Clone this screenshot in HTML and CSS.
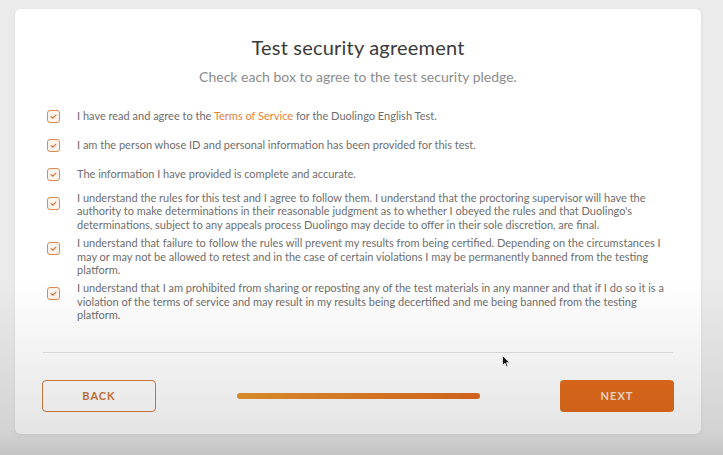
FILE: index.html
```html
<!DOCTYPE html>
<html>
<head>
    <title>Test security agreement</title>
    <meta name="viewport" content="width=device-width, initial-scale=1">
    <link rel="stylesheet" href="styles.css">
</head>
<body>
    <main class="card">
        <header class="head">
            <h1>Test security agreement</h1>
            <p>Check each box to agree to the test security pledge.</p>
        </header>

        <ul class="pledges">
            <li class="pledge">
                <span class="box-wrap"><span class="box"><svg viewBox="0 0 10 10"><path d="M2.8 5.2 L4.4 6.6 L7.2 3.8"/></svg></span></span>
                <div class="pledge-text"><span>I have read and agree to the <a href="#">Terms of Service</a> for the Duolingo English Test.</span></div>
            </li>
            <li class="pledge">
                <span class="box-wrap"><span class="box"><svg viewBox="0 0 10 10"><path d="M2.8 5.2 L4.4 6.6 L7.2 3.8"/></svg></span></span>
                <div class="pledge-text"><span>I am the person whose ID and personal information has been provided for this test.</span></div>
            </li>
            <li class="pledge">
                <span class="box-wrap"><span class="box"><svg viewBox="0 0 10 10"><path d="M2.8 5.2 L4.4 6.6 L7.2 3.8"/></svg></span></span>
                <div class="pledge-text"><span>The information I have provided is complete and accurate.</span></div>
            </li>
            <li class="pledge">
                <span class="box-wrap"><span class="box"><svg viewBox="0 0 10 10"><path d="M2.8 5.2 L4.4 6.6 L7.2 3.8"/></svg></span></span>
                <div class="pledge-text"><span>I understand the rules for this test and I agree to follow them. I understand that the proctoring supervisor will have the authority to make determinations in their reasonable judgment as to whether I obeyed the rules and that Duolingo's determinations, subject to any appeals process Duolingo may decide to offer in their sole discretion, are final.</span></div>
            </li>
            <li class="pledge">
                <span class="box-wrap"><span class="box"><svg viewBox="0 0 10 10"><path d="M2.8 5.2 L4.4 6.6 L7.2 3.8"/></svg></span></span>
                <div class="pledge-text"><span>I understand that failure to follow the rules will prevent my results from being certified. Depending on the circumstances I may or may not be allowed to retest and in the case of certain violations I may be permanently banned from the testing platform.</span></div>
            </li>
            <li class="pledge">
                <span class="box-wrap"><span class="box"><svg viewBox="0 0 10 10"><path d="M2.8 5.2 L4.4 6.6 L7.2 3.8"/></svg></span></span>
                <div class="pledge-text"><span>I understand that I am prohibited from sharing or reposting any of the test materials in any manner and that if I do so it is a violation of the terms of service and may result in my results being decertified and me being banned from the testing platform.</span></div>
            </li>
        </ul>

        <footer class="actions">
            <button class="btn btn-back">BACK</button>
            <div class="progress"><div class="progress-fill"></div></div>
            <button class="btn btn-next">NEXT</button>
        </footer>
    </main>

    <svg class="cursor" viewBox="0 0 8 13" width="8" height="13">
        <path d="M0.5 0.5 L0.5 10.5 L3 8.2 L4.6 12 L6 11.4 L4.5 7.7 L7.6 7.7 Z" fill="#111" stroke="#fff" stroke-width="0.8"/>
    </svg>
    <div class="shade"></div>
</body>
</html>
```

FILE: styles.css
```css
body {
    margin: 0;
    padding: 9px 22px 21px 15px;
    background-color: #ebebeb;
    font-family: Lato, "Open Sans", sans-serif;
    color: #6e6e6e;
}

.card {
    width: 686px;
    height: 425px;
    box-sizing: border-box;
    padding: 26px 28px 23px;
    background-color: #fff;
    border-radius: 6px;
    box-shadow: 0 1px 4px rgba(0, 0, 0, 0.06);
    display: flex;
    flex-direction: column;
}

.head {
    text-align: center;
}

.head h1 {
    margin: 0;
    font-size: 20px;
    line-height: 24px;
    font-weight: 400;
    letter-spacing: 0.2px;
    color: #3a3a3a;
}

.head p {
    margin: 9px 0 0;
    font-size: 14px;
    line-height: 17px;
    color: #8c8c8c;
}

.pledges {
    list-style: none;
    margin: 19px 0 0;
    padding: 0 4px;
    display: flex;
    flex-direction: column;
    gap: 5px;
}

.pledge {
    display: flex;
    align-items: flex-start;
    gap: 17px;
}

.box-wrap {
    height: 24px;
    display: flex;
    align-items: center;
    flex: none;
}

.box {
    width: 11px;
    height: 11px;
    border: 1.5px solid #de8a52;
    border-radius: 3px;
    background-color: #fdf4ee;
    display: flex;
}

.box svg {
    width: 11px;
    height: 11px;
    fill: none;
    stroke: #d9733a;
    stroke-width: 1;
    stroke-linecap: round;
    stroke-linejoin: round;
}

.pledge-text {
    min-height: 24px;
    display: flex;
    align-items: center;
    font-size: 11px;
    line-height: 13.4px;
}

.pledge-text a {
    color: #e8833a;
    text-decoration: none;
}

.actions {
    margin-top: 30px;
    border-top: 1px solid #e2e2e2;
    padding-top: 27px;
    display: flex;
    align-items: center;
    justify-content: space-between;
}

.btn {
    width: 114px;
    height: 32px;
    margin: 0 -1px;
    border-radius: 4px;
    font-family: Lato, sans-serif;
    font-size: 11px;
    font-weight: 700;
    letter-spacing: 1px;
    cursor: pointer;
}

.btn-back {
    background-color: #fff;
    border: 1.5px solid #d67b42;
    color: #cf7640;
}

.btn-next {
    background-color: #e36c1c;
    border: none;
    color: #f8e2d2;
}

.progress {
    width: 243px;
    height: 6px;
    border-radius: 3px;
    overflow: hidden;
    background-color: #eee;
}

.progress-fill {
    width: 100%;
    height: 100%;
    background: linear-gradient(to right, #e8962c, #e0691f);
}

.cursor {
    position: absolute;
    left: 502px;
    top: 355px;
}

.shade {
    position: absolute;
    left: 0;
    top: 0;
    width: 723px;
    height: 455px;
    pointer-events: none;
    background: linear-gradient(to bottom, rgba(0, 0, 0, 0) 0, rgba(0, 0, 0, 0) 280px, rgba(0, 0, 0, 0.1) 430px, rgba(0, 0, 0, 0.17) 455px);
}
```
